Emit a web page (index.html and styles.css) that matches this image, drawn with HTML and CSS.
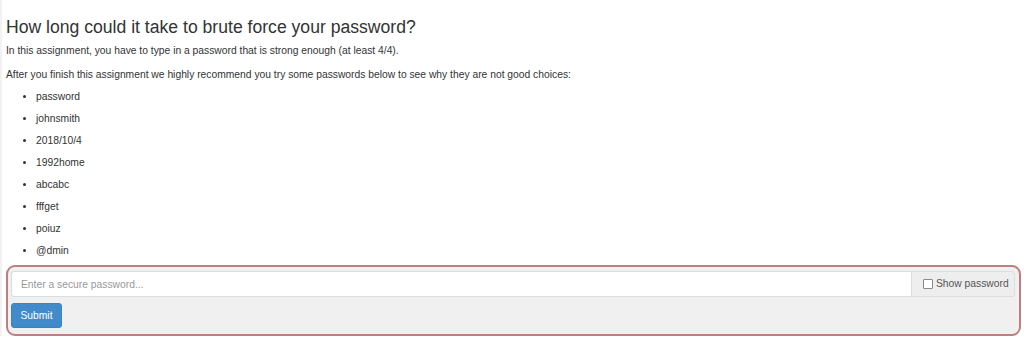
FILE: index.html
```html
<!DOCTYPE html>
<html lang="en">
<head>
    <meta charset="UTF-8">
    <title>Password strength</title>
    <link rel="stylesheet" href="styles.css">
</head>
<body>
    <div class="assignment">
        <h3 class="title">How long could it take to brute force your password?</h3>
        <p class="intro">In this assignment, you have to type in a password that is strong enough (at least 4/4).</p>
        <p class="intro lead-in">After you finish this assignment we highly recommend you try some passwords below to see why they are not good choices:</p>
        <ul class="examples">
            <li>password</li>
            <li>johnsmith</li>
            <li>2018/10/4</li>
            <li>1992home</li>
            <li>abcabc</li>
            <li>fffget</li>
            <li>poiuz</li>
            <li>@dmin</li>
        </ul>

        <form class="attack-form">
            <div class="input-group">
                <input type="password" class="form-control" placeholder="Enter a secure password...">
                <label class="input-addon"><input type="checkbox" class="show-box"> Show password</label>
            </div>
            <button type="button" class="btn-submit">Submit</button>
        </form>
    </div>
</body>
</html>
```

FILE: styles.css
```css
html, body {
    margin: 0;
    padding: 0;
    background: #fff;
}

body {
    border-left: 2px solid #f2f2f2;
    font-family: "Liberation Sans", Arial, sans-serif;
    font-size: 10.3px;
    line-height: 16px;
    color: #333;
}

.assignment {
    padding: 0 3px 0 4px;
}

.title {
    margin: 16px 0 5px;
    font-size: 17.6px;
    font-weight: 500;
    line-height: 22px;
    color: #333;
}

.intro {
    margin: 0 0 8px;
}

.lead-in {
    margin-bottom: 5px;
}

.examples {
    margin: 0 0 6px;
    padding-left: 30px;
}

.examples li {
    margin-top: 6px;
}

.attack-form {
    background: #f0f0f0;
    border: 2px solid #bd8080;
    border-radius: 9px;
    padding: 4px 4px 6px 3px;
}

.input-group {
    display: flex;
    height: 26px;
}

.form-control {
    flex: 1;
    min-width: 0;
    box-sizing: border-box;
    height: 26px;
    margin: 0;
    padding: 0 9px;
    border: 1px solid #ddd;
    border-right: none;
    border-radius: 3px 0 0 3px;
    background: #fff;
    font-family: inherit;
    font-size: 10.3px;
    color: #555;
}

.form-control::placeholder {
    color: #999;
}

.input-addon {
    display: flex;
    align-items: center;
    gap: 3px;
    box-sizing: border-box;
    width: 104px;
    padding: 0 6px 0 11px;
    border: 1px solid #ddd;
    border-radius: 0 3px 3px 0;
    background: #eee;
    color: #555;
    white-space: nowrap;
}

.show-box {
    -webkit-appearance: none;
    appearance: none;
    flex: 0 0 auto;
    box-sizing: border-box;
    width: 10px;
    height: 10px;
    margin: 0;
    border: 1px solid #888;
    border-radius: 1px;
    background: #fff;
}

.btn-submit {
    display: block;
    margin-top: 6px;
    width: 51px;
    height: 25px;
    padding: 0;
    border: 1px solid #3b84c4;
    border-radius: 3px;
    background: #428bca;
    color: #fff;
    font-family: inherit;
    font-size: 10.3px;
}
```
